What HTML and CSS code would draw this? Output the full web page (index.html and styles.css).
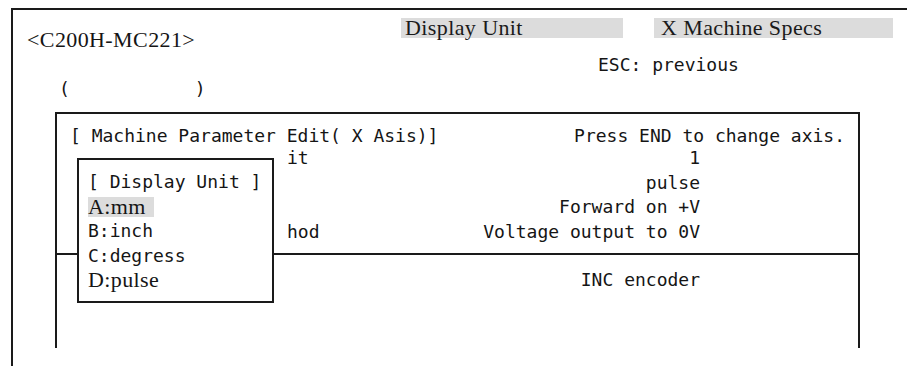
FILE: index.html
```
<!DOCTYPE html>
<html>
<head>
    <meta charset="UTF-8">
    <title>C200H-MC221 Machine Parameter Edit</title>
    <link rel="stylesheet" href="styles.css">
</head>
<body>
    <div class="frame">
        <div class="head">
            <div class="model">&lt;C200H-MC221&gt;</div>
            <div class="head-right">
                <div class="tabs">
                    <div class="tab tab-unit">Display Unit</div>
                    <div class="tab tab-spec">X Machine Specs</div>
                </div>
                <div class="esc">ESC: previous</div>
            </div>
        </div>
        <div class="parens"><span>(</span><span>)</span></div>

        <div class="screen">
            <div class="sect sect-top">
                <div class="title-row">
                    <span>[ Machine Parameter Edit( X Asis)]</span>
                    <span>Press END to change axis.</span>
                </div>
                <div class="param-row"><span></span><span>it</span><span class="val">1</span></div>
                <div class="param-row"><span></span><span></span><span class="val">pulse</span></div>
                <div class="param-row"><span></span><span></span><span class="val">Forward on +V</span></div>
                <div class="param-row"><span></span><span>hod</span><span class="val">Voltage output to 0V</span></div>
            </div>
            <div class="sect sect-bottom">
                <div class="param-row"><span></span><span></span><span class="val">INC encoder</span></div>
            </div>

            <!-- selection window over the parameter list -->
            <div class="popup">
                <div class="pop-line">[ Display Unit ]</div>
                <div class="pop-line serif"><span class="picked">A:mm</span></div>
                <div class="pop-line">B:inch</div>
                <div class="pop-line">C:degress</div>
                <div class="pop-line serif">D:pulse</div>
            </div>
        </div>
    </div>
</body>
</html>
```

FILE: styles.css
```
html, body {
    margin: 0;
    padding: 0;
    background: #ffffff;
    overflow: hidden;
}

body {
    color: #151515;
    font-family: "DejaVu Sans Mono", "Liberation Mono", monospace;
    font-size: 18px;
}

.frame {
    box-sizing: border-box;
    margin: 8px 0 0 11px;
    height: 358px;
    border-top: 2px solid #1a1a1a;
    border-left: 2px solid #1a1a1a;
}

/* header: model name, tabs, key hint */
.head {
    display: flex;
    align-items: flex-start;
    padding-right: 14px;
}

.model {
    font-family: "Liberation Serif", "Times New Roman", serif;
    font-size: 22px;
    letter-spacing: 0.4px;
    line-height: 24px;
    padding: 18px 0 0 14px;
}

.head-right {
    margin-left: auto;
    padding-top: 8px;
}

.tabs {
    display: flex;
    gap: 31px;
}

.tab {
    box-sizing: border-box;
    height: 20px;
    line-height: 20px;
    padding-left: 4px;
    background: #dcdcdc;
    font-family: "Liberation Serif", "Times New Roman", serif;
    font-size: 22px;
    letter-spacing: 0.4px;
    color: #1a1a1a;
}

.tab-unit { width: 222px; }
.tab-spec { width: 239px; padding-left: 7px; }

.esc {
    margin: 15px 0 0 197px;
    line-height: 24px;
}

.parens {
    display: flex;
    gap: 125px;
    padding-left: 46px;
    line-height: 24px;
}

/* the parameter screen */
.screen {
    position: relative;
    box-sizing: border-box;
    margin: 11px 0 0 42px;
    width: 805px;
    height: 236px;
    border: 2px solid #1a1a1a;
    border-bottom: none;
}

.sect {
    padding: 0 13px;
}

.sect-top {
    padding-top: 12px;
    padding-bottom: 9px;
    border-bottom: 2px solid #1a1a1a;
}

.sect-bottom {
    padding-top: 13px;
}

.title-row {
    display: flex;
    justify-content: space-between;
    line-height: 20px;
}

.param-row {
    display: grid;
    grid-template-columns: 217px 1fr auto;
    margin-right: 145px;
    line-height: 24.5px;
    height: 24.5px;
}

.val {
    text-align: right;
}

.popup {
    position: absolute;
    left: 20px;
    top: 44px;
    box-sizing: border-box;
    width: 197px;
    height: 145px;
    padding: 10px 0 0 9px;
    background: #ffffff;
    border: 2px solid #1a1a1a;
}

.pop-line {
    line-height: 24.5px;
    height: 24.5px;
    white-space: pre;
}

.serif {
    font-family: "Liberation Serif", "Times New Roman", serif;
    font-size: 22px;
    letter-spacing: 0.4px;
}

.picked {
    display: inline-block;
    line-height: 20px;
    padding-right: 8px;
    background: #dcdcdc;
}
```
